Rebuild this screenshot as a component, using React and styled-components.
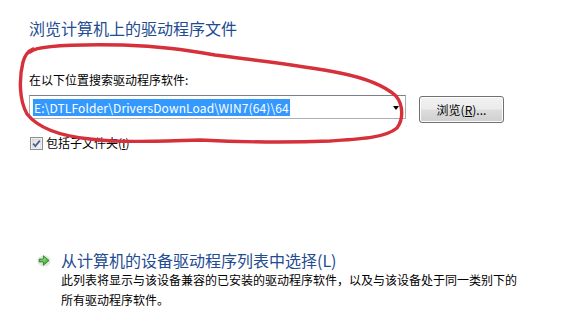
import React from 'react';
import styled, { createGlobalStyle } from 'styled-components';

const GlobalStyle = createGlobalStyle`
  html, body {
    margin: 0;
    padding: 0;
    background: #ffffff;
  }
  body {
    font-family: "Noto Sans CJK SC", "Noto Sans", sans-serif;
    color: #000000;
  }
`;

const Page = styled.div`
  position: relative;
  width: 571px;
  height: 314px;
  overflow: hidden;
  background: #ffffff;
  box-sizing: border-box;
  padding: 18px 0 0 29px;
`;

const Title = styled.div`
  font-size: 16px;
  line-height: 21px;
  color: #224b91;
`;

const Label = styled.div`
  margin-top: 33px;
  font-size: 12px;
  line-height: 16px;
`;

const PathRow = styled.div`
  display: flex;
  align-items: flex-start;
  gap: 13px;
  margin-top: 7px;
`;

const Combo = styled.div`
  position: relative;
  width: 377px;
  height: 24px;
  box-sizing: border-box;
  border: 1px solid #abadb3;
  border-top-color: #7a7e86;
  background: #fff;
  display: flex;
  align-items: center;
  padding-left: 3px;
`;

const Selected = styled.span`
  background: #3399ff;
  color: #ffffff;
  font-size: 12px;
  line-height: 17px;
  letter-spacing: 0.12px;
  padding: 0 1px;
  white-space: nowrap;
`;

const DropArrow = styled.span`
  position: absolute;
  right: 6px;
  top: 10px;
  width: 0;
  height: 0;
  border-left: 3px solid transparent;
  border-right: 3px solid transparent;
  border-top: 4px solid #000;
`;

const Button = styled.button`
  width: 85px;
  height: 27px;
  margin-top: 1px;
  box-sizing: border-box;
  border: 1px solid #707070;
  border-radius: 3px;
  background: linear-gradient(#f2f2f2 0%, #ebebeb 48%, #dddddd 52%, #cfcfcf 100%);
  box-shadow: inset 0 0 0 1px #fcfcfc;
  font-family: "Noto Sans CJK SC", "Noto Sans", sans-serif;
  font-size: 12px;
  color: #000;
  padding: 0;
  u {
    text-decoration: underline;
  }
`;

const CheckRow = styled.label`
  display: flex;
  align-items: center;
  gap: 3px;
  margin-top: 12px;
  margin-left: 1px;
  font-size: 12px;
  line-height: 16px;
`;

const CommandLink = styled.div`
  display: flex;
  align-items: flex-start;
  gap: 10px;
  margin-top: 99px;
  margin-left: 8px;
`;

const LinkIcon = styled.div`
  padding-top: 4px;
  line-height: 0;
`;

const LinkBody = styled.div`
  display: flex;
  flex-direction: column;
`;

const LinkTitle = styled.div`
  font-size: 16px;
  line-height: 20px;
  color: #224b91;
`;

const LinkDesc = styled.div`
  font-size: 12px;
  line-height: 20px;
  color: #000;
`;

const Annotation = styled.svg`
  position: absolute;
  left: 0;
  top: 0;
  pointer-events: none;
`;

function CheckBox() {
  return (
    <svg width="13" height="13" viewBox="0 0 13 13">
      <defs>
        <linearGradient id="cbg" x1="0" y1="0" x2="1" y2="1">
          <stop offset="0" stopColor="#dcdcdc" />
          <stop offset="1" stopColor="#fbfbfb" />
        </linearGradient>
      </defs>
      <rect x="0.5" y="0.5" width="12" height="12" fill="#fff" stroke="#8e8f8f" />
      <rect x="2" y="2" width="9" height="9" fill="url(#cbg)" stroke="#c6c6c6" strokeWidth="0.6" />
      <path d="M3.2 6.6 L5.4 9 L9.8 3.6" fill="none" stroke="#4a5f97" strokeWidth="1.8" />
    </svg>
  );
}

function GreenArrow() {
  return (
    <svg width="14" height="13" viewBox="0 0 14 13">
      <defs>
        <radialGradient id="ga" cx="0.4" cy="0.35" r="0.7">
          <stop offset="0" stopColor="#8fe27a" />
          <stop offset="1" stopColor="#2f9a2a" />
        </radialGradient>
      </defs>
      <ellipse cx="7" cy="7" rx="6.6" ry="5.8" fill="#e4e6e4" />
      <path
        d="M2.2 5.1 H6.4 V1.8 L12 6.5 L6.4 11.2 V7.9 H2.2 Z"
        fill="url(#ga)"
        stroke="#1f7a1f"
        strokeWidth="0.8"
        strokeLinejoin="round"
      />
    </svg>
  );
}

export default function App() {
  return (
    <>
      <GlobalStyle />
      <Page>
        <Title>浏览计算机上的驱动程序文件</Title>
        <Label>在以下位置搜索驱动程序软件:</Label>
        <PathRow>
          <Combo>
            <Selected>E:\DTLFolder\DriversDownLoad\WIN7(64)\64</Selected>
            <DropArrow />
          </Combo>
          <Button>浏览(<u>R</u>)...</Button>
        </PathRow>
        <CheckRow>
          <CheckBox />
          <span>包括子文件夹(<u>I</u>)</span>
        </CheckRow>
        <CommandLink>
          <LinkIcon>
            <GreenArrow />
          </LinkIcon>
          <LinkBody>
            <LinkTitle>从计算机的设备驱动程序列表中选择(L)</LinkTitle>
            <LinkDesc>
              此列表将显示与该设备兼容的已安装的驱动程序软件，以及与该设备处于同一类别下的
              <br />
              所有驱动程序软件。
            </LinkDesc>
          </LinkBody>
        </CommandLink>
        <Annotation width="571" height="314" viewBox="0 0 571 314">
          <path
            d="M30 52 C 36 46, 70 44, 123 45 C 160 46, 185 50, 215 55 C 260 61, 300 65, 340 73 C 365 78, 385 86, 396 96 C 404 106, 403 120, 397 128 C 385 138, 360 139, 330 141 C 280 143, 240 142, 200 140 C 160 141, 120 143, 90 139 C 60 136, 38 128, 27 114 C 19 100, 19 78, 23 62 C 25 55, 28 51, 33 49"
            fill="none"
            stroke="#d6303a"
            strokeWidth="3.4"
            strokeLinecap="round"
            strokeLinejoin="round"
          />
        </Annotation>
      </Page>
    </>
  );
}
